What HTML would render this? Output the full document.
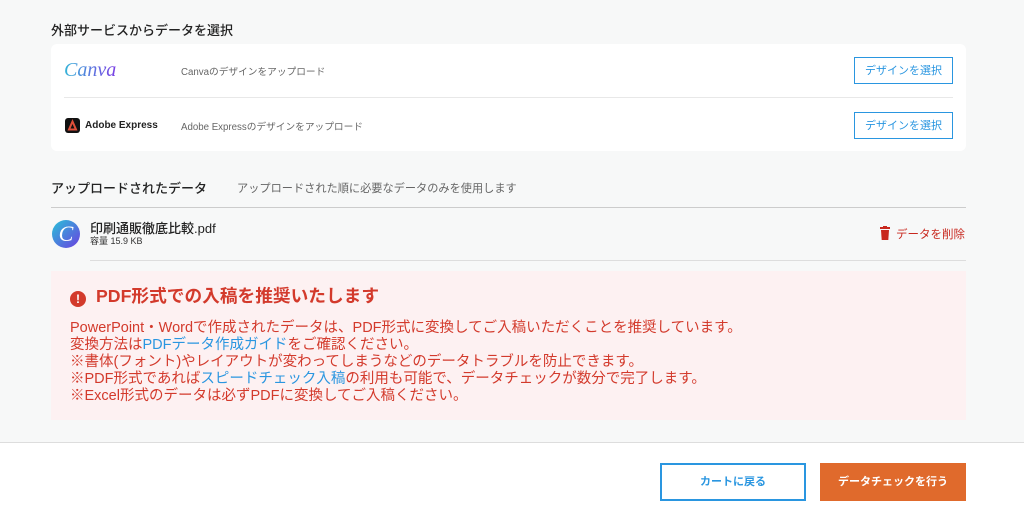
<!DOCTYPE html>
<html><head><meta charset="utf-8"><style>
*{margin:0;padding:0;box-sizing:border-box}
body{width:1024px;height:521px;overflow:hidden;background:#fff;font-family:"Liberation Sans","Noto Sans CJK JP",sans-serif;color:#222;position:relative}
.top{position:absolute;left:0;top:0;width:1024px;height:443px;background:#f7f8f8;border-bottom:1px solid #ddd}
.abs{position:absolute}
.h{font-size:13px;font-weight:500}
.card{left:51px;top:44px;width:915px;height:107px;background:#fff;border-radius:6px}
.sm{font-size:9.7px;color:#666}
.btn{border:1.5px solid #2a96e0;color:#2a96e0;background:#fff;font-size:11px;text-align:center}
.alert{left:51px;top:271px;width:915px;height:149px;background:#fdf1f2;color:#d33a2c;font-size:14.5px;line-height:17px}
a{color:#2a96e0;text-decoration:none}
</style></head><body>
<div class="top"></div>
<div class="abs h" style="left:51px;top:20px">外部サービスからデータを選択</div>
<div class="abs card">
 <div class="abs" style="left:13px;top:15px;font-family:'Liberation Serif',serif;font-style:italic;font-size:20px;background:linear-gradient(90deg,#35b5d8,#7b3fe4);-webkit-background-clip:text;color:transparent">Canva</div>
 <div class="abs sm" style="left:130px;top:20px">Canvaのデザインをアップロード</div>
 <div class="abs btn" style="left:803px;top:13px;width:99px;height:27px;line-height:27px">デザインを選択</div>
 <div class="abs" style="left:13px;top:53px;width:889px;height:1px;background:#e8e8e8"></div>
 <div class="abs" style="left:14px;top:74px;width:15px;height:15px;background:#111;border-radius:3px"><svg width="15" height="15" viewBox="0 0 15 15"><path d="M4 11.5 L7.5 3.5 L11 11.5 Z" fill="none" stroke="#e0503a" stroke-width="2"/></svg></div>
 <div class="abs" style="left:34px;top:76px;font-size:10px;font-weight:bold">Adobe Express</div>
 <div class="abs sm" style="left:130px;top:75px">Adobe Expressのデザインをアップロード</div>
 <div class="abs btn" style="left:803px;top:68px;width:99px;height:27px;line-height:27px">デザインを選択</div>
</div>
<div class="abs h" style="left:51px;top:178px">アップロードされたデータ</div>
<div class="abs" style="left:237px;top:180px;font-size:11.2px;color:#666">アップロードされた順に必要なデータのみを使用します</div>
<div class="abs" style="left:51px;top:207px;width:915px;height:1px;background:#ccc"></div>
<div class="abs" style="left:52px;top:220px;width:28px;height:28px;border-radius:50%;background:linear-gradient(135deg,#29c2d8,#6b3fe0);color:#fff;font-family:'Liberation Serif',serif;font-style:italic;font-size:22px;text-align:center;line-height:28px">C</div>
<div class="abs" style="left:90px;top:218px;font-size:13px;font-weight:500">印刷通販徹底比較.pdf</div>
<div class="abs" style="left:90px;top:234px;font-size:9px;color:#333">容量 15.9 KB</div>
<div class="abs" style="left:879px;top:226px;font-size:11.5px;color:#c8281e"><svg width="12" height="14" viewBox="0 0 12 14" style="vertical-align:-2px;margin-right:5px"><rect x="1" y="1" width="10" height="2" fill="#c8281e"/><rect x="4" y="0" width="4" height="2" fill="#c8281e"/><path d="M2 4h8l-0.7 10H2.7z" fill="#c8281e"/></svg>データを削除</div>
<div class="abs" style="left:90px;top:260px;width:876px;height:1px;background:#ddd"></div>
<div class="abs alert">
 <div class="abs" style="left:19px;top:20px;width:16px;height:16px;border-radius:50%;background:#d33a2c;color:#fff;font-size:12px;font-weight:bold;text-align:center;line-height:16px">!</div>
 <div class="abs" style="left:45px;top:17px;font-size:17.7px;font-weight:bold">PDF形式での入稿を推奨いたします</div>
 <div class="abs" style="left:19px;top:49px;white-space:nowrap">PowerPoint・Wordで作成されたデータは、PDF形式に変換してご入稿いただくことを推奨しています。<br>変換方法は<a>PDFデータ作成ガイド</a>をご確認ください。<br>※書体(フォント)やレイアウトが変わってしまうなどのデータトラブルを防止できます。<br>※PDF形式であれば<a>スピードチェック入稿</a>の利用も可能で、データチェックが数分で完了します。<br>※Excel形式のデータは必ずPDFに変換してご入稿ください。</div>
</div>
<div class="abs" style="left:660px;top:463px;width:146px;height:38px;border:2px solid #2a96e0;color:#2a96e0;font-size:11px;font-weight:bold;text-align:center;line-height:34px">カートに戻る</div>
<div class="abs" style="left:820px;top:463px;width:146px;height:38px;background:#e06a2c;color:#fff;font-size:11px;font-weight:bold;text-align:center;line-height:38px">データチェックを行う</div>
</body></html>
